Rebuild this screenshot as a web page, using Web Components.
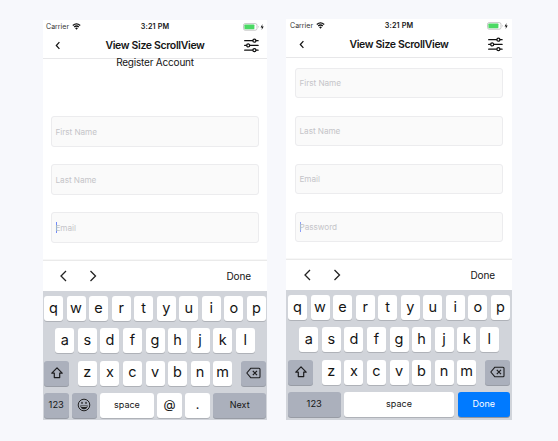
<!DOCTYPE html>
<html lang="en">
<head>
<meta charset="utf-8">
<title>View Size ScrollView</title>
<style>
html,body{margin:0;height:100%}
body{background:#f7f8fc;font-family:Inter,"Liberation Sans",sans-serif;color:#151515;overflow:hidden}
main{display:flex;align-items:flex-start;gap:19px;padding:20px 0 0 43px}
</style>
</head>
<body>
<main>
<phone-screen kind="next">
  <status-bar slot="top"></status-bar>
  <nav-bar slot="top">View Size ScrollView</nav-bar>
  <form-heading>Register Account</form-heading>
  <text-field>First Name</text-field>
  <text-field>Last Name</text-field>
  <text-field active>Email</text-field>
  <input-toolbar slot="bottom">Done</input-toolbar>
  <key-board slot="bottom" kind="email"></key-board>
</phone-screen>
<phone-screen kind="done">
  <status-bar slot="top"></status-bar>
  <nav-bar slot="top">View Size ScrollView</nav-bar>
  <text-field>First Name</text-field>
  <text-field>Last Name</text-field>
  <text-field>Email</text-field>
  <text-field active>Password</text-field>
  <input-toolbar slot="bottom">Done</input-toolbar>
  <key-board slot="bottom" kind="text"></key-board>
</phone-screen>
</main>
<script>
const define = (name, html, setup) => customElements.define(name, class extends HTMLElement {
  connectedCallback() {
    if (this.shadowRoot) return;
    this.attachShadow({mode: 'open'}).innerHTML = html;
    if (setup) setup(this, this.shadowRoot);
  }
});

define('phone-screen', `<style>
:host{display:flex;flex-direction:column;box-sizing:border-box;width:224px;height:400px;background:#fff}
:host([kind=done]){width:226px;height:401px;margin-top:-1px}
.body{flex:1;min-height:0;display:flex;flex-direction:column;gap:17px;padding:0 8px}
:host([kind=done]) .body{padding:10px 9px 0;gap:18px}
</style><slot name="top"></slot><div class="body"><slot></slot></div><slot name="bottom"></slot>`);

define('status-bar', `<style>
:host{display:grid;grid-template-columns:1fr auto 1fr;align-items:center;height:13px;padding:0 3px;font-size:7px;line-height:13px}
.l,.r{display:flex;align-items:center;gap:3px}
.l{letter-spacing:.02px;color:#333}.r{justify-content:flex-end;gap:2px}
.t{font-weight:600;font-size:7.2px;letter-spacing:.15px}
svg{display:block}
:host-context(phone-screen[kind=done]){padding:0 4px}
</style><div class="l"><span>Carrier</span><svg width="9" height="7" viewBox="0 0 9 7" fill="none" stroke="#111"><path d="M.8 2.5Q4.5-.7 8.2 2.5M2.2 4Q4.5 2 6.8 4" stroke-width="1.3"/><path d="M3.1 5.2Q4.5 4 5.9 5.2L4.5 6.7Z" fill="#111" stroke="none"/></svg></div>
<span class="t">3:21 PM</span>
<div class="r"><svg width="21" height="8" viewBox="0 0 21 8"><rect x=".5" y=".6" width="13.5" height="6.6" rx="1.7" fill="#fff" stroke="#b9b9b9" stroke-width=".8"/><rect x="1.4" y="1.5" width="10" height="4.8" rx=".8" fill="#4cd964"/><path d="M15 2.8q1.2 1 0 2.2z" fill="#aaa"/><path d="M19.5 1L17.6 4.4H19L18.6 7L20.7 3.6H19.2Z" fill="#111"/></svg></div>`);

define('nav-bar', `<style>
:host{display:grid;grid-template-columns:30px 1fr 30px;align-items:center;height:26px;box-sizing:border-box;border-bottom:1px solid #e7e7e9;font-size:10.5px;font-weight:600;letter-spacing:-.35px;line-height:24px;text-align:center;white-space:nowrap}
:host-context(phone-screen[kind=done]){padding:0 1px}
svg{display:block}
.b{margin-left:12px}.m{margin-left:5.5px}
</style><svg class="b" width="6" height="9" viewBox="0 0 6 9" fill="none" stroke="#111" stroke-width="1.2"><path d="M4.4 1.1L1.3 4.5L4.4 7.9"/></svg><span><slot></slot></span>
<svg class="m" width="17" height="15" viewBox="0 0 17 15" fill="#fff" stroke="#111" stroke-width="1.3" stroke-linecap="round"><path d="M1.7 2.7H15.1M1.7 7.4H15.1M1.7 12.2H15.1"/><circle cx="11.4" cy="2.7" r="1.5"/><circle cx="5.2" cy="7.4" r="1.5"/><circle cx="11.4" cy="12.2" r="1.5"/></svg>`);

define('form-heading', `<style>
:host{display:block;height:40px;flex:none;font-size:10px;letter-spacing:-.2px;line-height:6px;text-align:center;white-space:nowrap}
</style><slot></slot>`);

define('text-field', `<style>
:host{display:flex;align-items:center;box-sizing:border-box;height:31px;flex:none;border:1px solid #ececee;border-radius:3px;background:#fafafa;padding-left:3.5px;font-size:8.2px;letter-spacing:-.05px;color:#c5c5c9}
i{display:none;width:1.5px;height:11px;margin-right:-1.5px;background:#7188fa}
:host([active]) i{display:block}
:host-context(phone-screen[kind=done]){height:30px}
:host-context(phone-screen[kind=done]) i{width:1px;margin-right:-1px;height:10px;background:#8c9ffb}
</style><i></i><span><slot></slot></span>`);

define('input-toolbar', `<style>
:host{display:flex;align-items:center;height:30px;border-top:1px solid #eaeaea;box-shadow:0 -1px 0 #f7f7f7;padding:0 16px 0 15px;font-size:10px;letter-spacing:-.1px;gap:20px}
:host-context(phone-screen[kind=done]){padding:0 17px 0 16px}
span{margin-left:auto}
svg{display:block}
</style><svg width="10" height="12" viewBox="0 0 10 12" fill="none" stroke="#222" stroke-width="1.3"><path d="M8 1L3 6L8 11"/></svg><svg width="10" height="12" viewBox="0 0 10 12" fill="none" stroke="#222" stroke-width="1.3"><path d="M2.5 1L7.5 6L2.5 11"/></svg><span><slot></slot></span>`);

define('key-cap', `<style>
:host{display:flex;align-items:center;justify-content:center;box-sizing:border-box;height:25px;width:19px;border-radius:3px;background:#fff;box-shadow:0 1px 0 #afb2b8;font-size:14.5px;line-height:20px}
:host(:not([kind])){padding-bottom:2px}
:host([kind]){font-size:9px}
:host([kind=at]){font-size:12.5px}
:host([kind=mod]),:host([kind=num]){background:#abb0bc;box-shadow:0 1px 0 #989ca5}
:host([kind=num]){font-size:9.4px}
:host([kind=go]){background:#007aff;color:#fff;box-shadow:0 1px 0 #92969e}
</style><slot></slot>`);

const shift = '<svg width="14" height="14" viewBox="0 0 14 14" fill="none" stroke="#1c1c1e" stroke-width="1.2" stroke-linejoin="round"><path d="M7 1.8L12.2 7.2H9.7V11.6H4.3V7.2H1.8Z"/></svg>';
const del = '<svg width="15" height="12" viewBox="0 0 15 12" fill="none" stroke="#1c1c1e" stroke-width="1.1" stroke-linejoin="round"><path d="M4.9 1.2H13Q14 1.2 14 2.2V9.8Q14 10.8 13 10.8H4.9L.8 6Z"/><path d="M6.8 3.9L11 8.1M11 3.9L6.8 8.1" stroke-width="1.2"/></svg>';
const face = '<svg width="14" height="14" viewBox="0 0 14 14" fill="none" stroke="#222" stroke-width="1"><circle cx="7" cy="7" r="5.8"/><path d="M3.2 7.5H10.8Q10.3 11.2 7 11.2T3.2 7.5Z" fill="#222" stroke="none"/><path d="M4.2 8.5H9.8" stroke="#c3c6ce" stroke-width=".8"/><ellipse cx="5" cy="4.9" rx=".75" ry="1.1" fill="#222" stroke="none"/><ellipse cx="9" cy="4.9" rx=".75" ry="1.1" fill="#222" stroke="none"/></svg>';
const key = (label, width, kind) => `<key-cap${kind ? ` kind="${kind}"` : ''}${width ? ` style="width:${width}px"` : ''}>${label}</key-cap>`;
const letters = s => `<div class="set">${[...s].map(c => key(c)).join('')}</div>`;

define('key-board', `<style>
:host{display:flex;flex-direction:column;gap:7.33px;box-sizing:border-box;height:129px;background:#d1d4da;padding:5px 1px 0}
:host([kind=text]){height:130px;padding:5px 2px 0}
.row,.set{display:flex}
.row{justify-content:space-between}
.mid{justify-content:center}
.set{gap:3.556px}
key-cap{flex:none}
</style><div class="rows" style="display:contents"></div>`, (host, root) => {
  const last = host.getAttribute('kind') === 'email'
    ? key('123', 24.5, 'num') + key(face, 24.5, 'mod') + key('space', 53.5, 'word') + key('@', 24.5, 'at') + key('.', 24.5, 'at') + key('Next', 52.5, 'mod')
    : key('123', 52.5, 'num') + key('space', 110, 'word') + key('Done', 52.5, 'go');
  root.querySelector('.rows').innerHTML =
    `<div class="row">${letters('qwertyuiop')}</div><div class="row mid">${letters('asdfghjkl')}</div>
     <div class="row">${key(shift, 25, 'mod')}${letters('zxcvbnm')}${key(del, 25, 'mod')}</div><div class="row">${last}</div>`;
});
</script>
</body>
</html>
